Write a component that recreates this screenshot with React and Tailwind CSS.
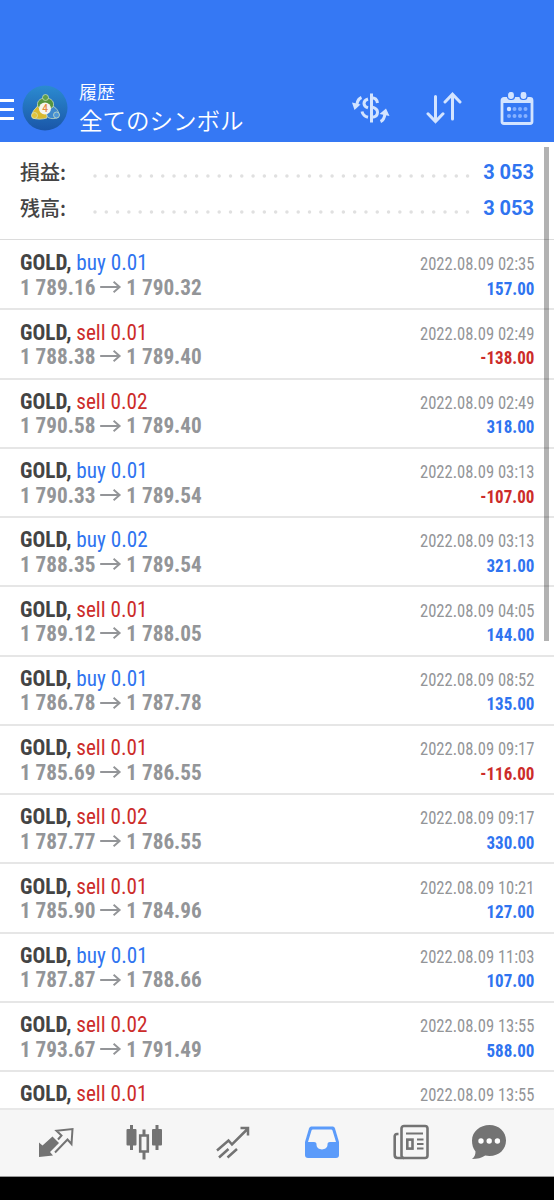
import React from 'react';

const FONT = "font-['Roboto_Condensed','Roboto','Noto_Sans_CJK_JP',sans-serif] [font-stretch:condensed]";

const SUMMARY = [
  { label: '損益:', value: '3 053' },
  { label: '残高:', value: '3 053' },
];

const DEALS = [
  { side: 'buy', lot: '0.01', open: '1 789.16', close: '1 790.32', time: '2022.08.09 02:35', profit: '157.00' },
  { side: 'sell', lot: '0.01', open: '1 788.38', close: '1 789.40', time: '2022.08.09 02:49', profit: '-138.00' },
  { side: 'sell', lot: '0.02', open: '1 790.58', close: '1 789.40', time: '2022.08.09 02:49', profit: '318.00' },
  { side: 'buy', lot: '0.01', open: '1 790.33', close: '1 789.54', time: '2022.08.09 03:13', profit: '-107.00' },
  { side: 'buy', lot: '0.02', open: '1 788.35', close: '1 789.54', time: '2022.08.09 03:13', profit: '321.00' },
  { side: 'sell', lot: '0.01', open: '1 789.12', close: '1 788.05', time: '2022.08.09 04:05', profit: '144.00' },
  { side: 'buy', lot: '0.01', open: '1 786.78', close: '1 787.78', time: '2022.08.09 08:52', profit: '135.00' },
  { side: 'sell', lot: '0.01', open: '1 785.69', close: '1 786.55', time: '2022.08.09 09:17', profit: '-116.00' },
  { side: 'sell', lot: '0.02', open: '1 787.77', close: '1 786.55', time: '2022.08.09 09:17', profit: '330.00' },
  { side: 'sell', lot: '0.01', open: '1 785.90', close: '1 784.96', time: '2022.08.09 10:21', profit: '127.00' },
  { side: 'buy', lot: '0.01', open: '1 787.87', close: '1 788.66', time: '2022.08.09 11:03', profit: '107.00' },
  { side: 'sell', lot: '0.02', open: '1 793.67', close: '1 791.49', time: '2022.08.09 13:55', profit: '588.00' },
  { side: 'sell', lot: '0.01', time: '2022.08.09 13:55' },
];

const Logo = () => (
  <svg width="46" height="46" viewBox="0 0 46 46" className="block shrink-0">
    <defs>
      <linearGradient id="disc" x1="0" y1="0" x2="0" y2="1">
        <stop offset="0" stopColor="#2b8bd0" />
        <stop offset="1" stopColor="#1a56a8" />
      </linearGradient>
    </defs>
    <circle cx="23" cy="23" r="22.5" fill="url(#disc)" />
    <g stroke="#d5e6c4" strokeWidth="0.7">
      <path d="M10.500 33c-1.500-4 1-8 3.500-10l4-5 6 6 1 9c-5 1.500-10 1.500-14.500 0z" fill="#d9b92f" />
      <path d="M36 32.500c2.500-4-1-8.500-3-10l-5-3-5 6 3 7c3 1.500 7 1.500 10 0z" fill="#3f88cc" />
      <path d="M16 22c-2-5 1.500-9 7.500-9S33 17 31 22l-3 2h-9z" fill="#55953f" />
      <circle cx="23.500" cy="12.500" r="3" fill="#5f9f4a" />
      <circle cx="12.500" cy="30.500" r="3" fill="#e2c43c" />
      <circle cx="34.500" cy="30" r="3" fill="#4f96d6" />
    </g>
    <circle cx="23" cy="23.500" r="6" fill="#f7f5ee" />
    <text x="23" y="27" textAnchor="middle" fontSize="10" fontWeight="500" fill="#e58a3c" fontFamily="Roboto">4</text>
  </svg>
);

const CurrencyIcon = () => (
  <svg width="38" height="32" viewBox="0 0 38 32" fill="none" stroke="#d3e4ff" strokeWidth="3">
    <path d="M19.500 1.500v29" />
    <path d="M19.500 5.800c3.500 0 5.500 1.700 6 5.200M19.500 15c4 .8 6 2.300 6 5.300s-2 5-6 5" />
    <path d="M16 7c-2.800.8-4 2.400-4 4.500 0 2.200 1.200 3.300 4 4.300M10 19.500c.7 3 2.500 5 6 5.800" />
    <path d="M9.500 5.500C7 6.500 5.500 8.500 5 12M28.500 29.500c3-1.200 4-3.500 4.500-8" />
    <path d="M0 10.500l8.500 2-6 5.500zM27.500 22l6.500-5.500 3.500 7.500z" fill="#d3e4ff" stroke="none" />
  </svg>
);

const SortIcon = () => (
  <svg width="36" height="32" viewBox="0 0 36 32" fill="none" stroke="#d3e4ff" strokeWidth="3" strokeLinecap="round">
    <path d="M9.500 4.500v25M2 21.800l7.500 7.700 7.500-7.700M26.500 27V2.200M19 10l7.500-7.800L34 10" />
  </svg>
);

const CalendarIcon = () => (
  <svg width="34" height="34" viewBox="0 0 34 34">
    <rect x="2" y="7.500" width="30" height="25" rx="2" fill="none" stroke="#d3e4ff" strokeWidth="2.800" />
    <path d="M2 7h30v5H2z" fill="#d3e4ff" />
    <g fill="#d3e4ff" stroke="#3578f4" strokeWidth="1.200">
      <rect x="7.500" y="0.500" width="7" height="8" rx="3" />
      <rect x="20" y="0.500" width="7" height="8" rx="3" />
    </g>
    <circle cx="9" cy="18" r="2.200" fill="#d3e4ff" />
    <g fill="#86b1ff">
      <circle cx="14.500" cy="18" r="2" />
      <circle cx="20" cy="18" r="2" />
      <circle cx="25.500" cy="18" r="2" />
      <circle cx="9" cy="25" r="2" />
      <circle cx="14.500" cy="25" r="2" />
      <circle cx="20" cy="25" r="2" />
      <circle cx="25.500" cy="25" r="2" />
    </g>
  </svg>
);

const Header = () => (
  <header className="flex h-[142px] shrink-0 items-end bg-[#3578f4] pb-[11px] text-white">
    <div className="mb-[11px] flex h-[21px] w-[14px] shrink-0 flex-col justify-between">
      <div className="h-[3px] bg-white" />
      <div className="h-[3px] bg-white" />
      <div className="h-[3px] bg-white" />
    </div>
    <div className="ml-2"><Logo /></div>
    <div className="-mb-[6px] ml-[11px] flex-1 font-['Noto_Sans_CJK_JP',sans-serif] font-[350]">
      <div className="text-[18px] leading-[24px]">履歴</div>
      <div className="text-[23.500px] leading-[34px]">全てのシンボル</div>
    </div>
    <div className="mb-[6px] flex items-center">
      <CurrencyIcon />
      <div className="ml-[36px]"><SortIcon /></div>
      <div className="mr-[20px] ml-[38px]"><CalendarIcon /></div>
    </div>
  </header>
);

const Summary = () => (
  <section className="mb-[1.500px] h-[97.500px] shrink-0 border-b border-[#dcdcdc] pt-[12px] pr-[20px] pl-[20px]">
    {SUMMARY.map((item) => (
      <div key={item.label} className="flex h-[36px] items-center">
        <span className="w-[68px] font-['Noto_Sans_CJK_JP',sans-serif] text-[20px] leading-[36px] font-medium text-[#444]">{item.label}</span>
        <svg width="386" height="4" className="mt-[8px]">
          <line x1="7" y1="2" x2="384" y2="2" stroke="#e0e0e0" strokeWidth="3.500" strokeLinecap="round" strokeDasharray="0.010 11.280" />
        </svg>
        <span className="ml-auto font-['Roboto',sans-serif] text-[20px] font-bold text-[#2f74f0]">{item.value}</span>
      </div>
    ))}
  </section>
);

const Deal = ({ deal }) => (
  <div className={`flex h-[69.250px] shrink-0 justify-between border-b-2 border-[#e6e6e6] pt-[10.300px] pr-[20px] pl-[20px] ${FONT}`}>
    <div className="origin-left scale-x-[0.965] text-[22px] leading-[24.500px] whitespace-nowrap">
      <div>
        <span className="font-bold text-[#444]">GOLD, </span>
        <span className={deal.side === 'buy' ? 'text-[#2f74f0]' : 'text-[#cc2c2a]'}>{deal.side} {deal.lot}</span>
      </div>
      {deal.open && (
        <div className="flex items-center font-bold text-[#939598]">
          <span>{deal.open}</span>
          <svg width="22" height="12" viewBox="0 0 22 12" className="mx-[5px] -mt-[2px]" fill="none" stroke="#939598" strokeWidth="2">
            <path d="M0 6h20.500M14 0.800L20.200 6 14 11.200" />
          </svg>
          <span>{deal.close}</span>
        </div>
      )}
    </div>
    <div className="origin-right scale-x-[0.92] text-right text-[18px] leading-[24.500px] whitespace-nowrap">
      <div className="pt-px text-[#939598]">{deal.time}</div>
      {deal.profit && (
        <div className={`text-[18.500px] font-bold ${deal.profit.startsWith('-') ? 'text-[#cc2c2a]' : 'text-[#2f74f0]'}`}>{deal.profit}</div>
      )}
    </div>
  </div>
);

const TabBar = () => (
  <nav className="flex h-[69px] shrink-0 items-center border-t-2 border-b border-t-[#e8e8e8] border-b-[#999] bg-[#f6f6f6] pb-[2px] text-[#737373]">
    <svg width="36" height="34" viewBox="0 0 36 34" className="ml-[38px]">
      <path d="M1 32V17.500l3.500 3 10-9 6.500 6.500-9 9 3 3.500z" fill="currentColor" />
      <path d="M20 14.500l3.500-4-5-4.800 16-1.700-1 15-4-4.500L17 27.500" fill="none" stroke="currentColor" strokeWidth="2" />
    </svg>
    <svg width="36" height="36" viewBox="0 0 36 36" className="ml-[52px]">
      <rect x="0.500" y="5" width="10" height="16.500" rx="1" fill="currentColor" />
      <rect x="26" y="5" width="10" height="16.500" rx="1" fill="currentColor" />
      <path d="M5.500 1v25M31 1v25M18 5.500v6M18 28v7.500" stroke="currentColor" strokeWidth="3" />
      <path d="M14.200 11.500h7.600v16h-7.600z" fill="#f6f6f6" stroke="currentColor" strokeWidth="2.600" />
    </svg>
    <svg width="34" height="34" viewBox="0 0 34 34" className="ml-[54px]" fill="none" stroke="currentColor" strokeWidth="2.500">
      <path d="M1 25.500l11.500-10 3.500 4L31 4.500M24.500 3h7.500v7.500M3 32.500l9.500-8.500M11.500 32.500l9.500-8.500" />
    </svg>
    <svg width="36" height="34" viewBox="0 0 36 34" className="ml-[54px]">
      <path d="M8 1.500h20c1.500 0 2.500.6 3 2L35 17v13c0 2-1 3-3 3H4c-2 0-3-1-3-3V17L5 3.500c.5-1.400 1.500-2 3-2z" fill="#5b9bfa" />
      <path d="M9 4.500h18c.8 0 1.300.4 1.500 1.100L32 17h-6c-2 0-2.500 1-2.500 2.500 0 6.500-11 6.500-11 0 0-1.500-.5-2.500-2.500-2.500H4L7.500 5.600C7.700 4.900 8.200 4.500 9 4.500z" fill="#f6f6f6" />
    </svg>
    <svg width="36" height="36" viewBox="0 0 36 36" className="ml-[53px]" fill="none" stroke="currentColor" strokeWidth="2.600">
      <rect x="8.500" y="2" width="26" height="32" rx="2.500" />
      <path d="M5.500 10H4c-1.500 0-2.300.8-2.300 2.300V31c0 2 1 3 3 3H11" />
      <path d="M13 9.500h17M24 15.500h6.500M24 20h6.500M24 24.500h6.500" strokeWidth="2.200" />
      <rect x="14.300" y="15.600" width="5.200" height="9" />
    </svg>
    <svg width="36" height="36" viewBox="0 0 36 36" className="ml-[42px]">
      <path d="M18.500 1C28 1 35 7.500 35 16.500S28 32 18.500 32c-1.500 0-3-.2-4.300-.5C11 34 6 35 1 35c2.500-2 3.500-4.500 3.500-7.500C2 24.500 1 20.500 1 16.500 1 7.500 9 1 18.500 1z" fill="currentColor" />
      <g fill="#fff">
        <circle cx="10" cy="17" r="2.700" />
        <circle cx="18.200" cy="17" r="2.700" />
        <circle cx="26.400" cy="17" r="2.700" />
      </g>
    </svg>
  </nav>
);

const App = () => (
  <div className="flex h-[1200px] w-[554px] flex-col overflow-hidden bg-black">
    <Header />
    <main className="relative flex h-[966px] shrink-0 flex-col overflow-hidden bg-white">
      <Summary />
      {DEALS.map((deal, index) => (
        <Deal key={index} deal={deal} />
      ))}
      <div className="absolute top-[5px] right-[5px] h-[494px] w-[5px] bg-black/30" />
    </main>
    <TabBar />
  </div>
);

export default App;
